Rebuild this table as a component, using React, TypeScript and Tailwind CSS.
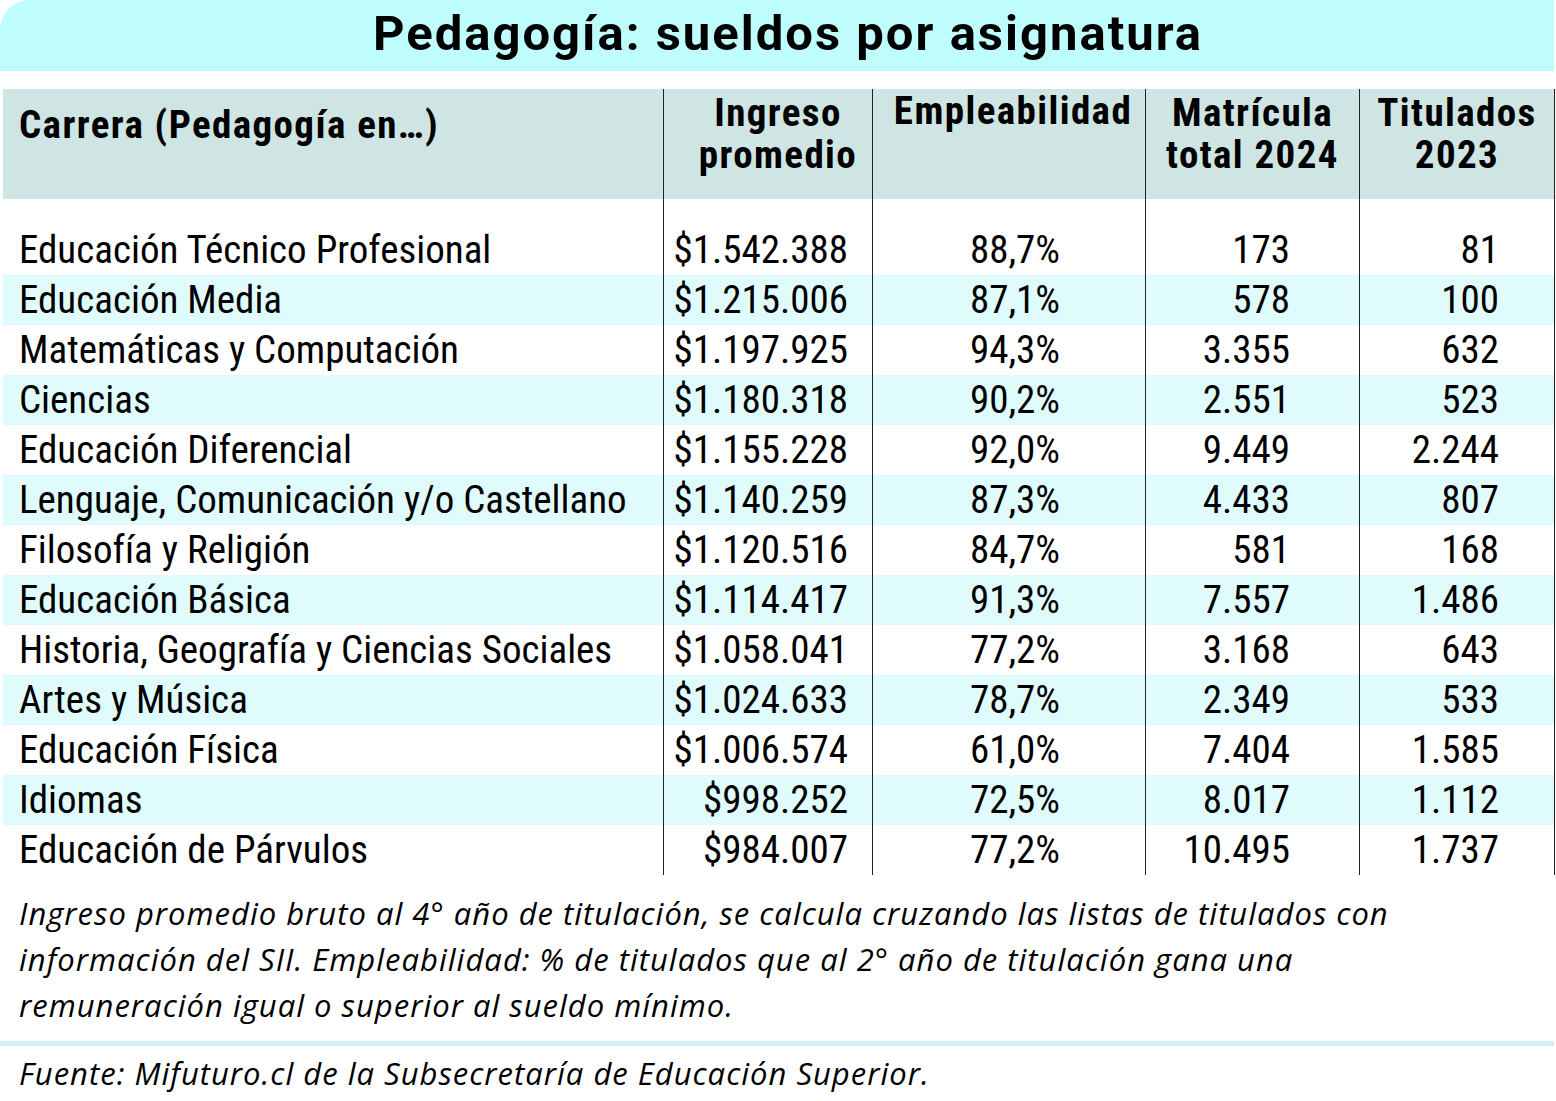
import React from "react";

type Row = [string, string, string, string, string];

const rows: Row[] = [
  ["Educación Técnico Profesional", "$1.542.388", "88,7%", "173", "81"],
  ["Educación Media", "$1.215.006", "87,1%", "578", "100"],
  ["Matemáticas y Computación", "$1.197.925", "94,3%", "3.355", "632"],
  ["Ciencias", "$1.180.318", "90,2%", "2.551", "523"],
  ["Educación Diferencial", "$1.155.228", "92,0%", "9.449", "2.244"],
  ["Lenguaje, Comunicación y/o Castellano", "$1.140.259", "87,3%", "4.433", "807"],
  ["Filosofía y Religión", "$1.120.516", "84,7%", "581", "168"],
  ["Educación Básica", "$1.114.417", "91,3%", "7.557", "1.486"],
  ["Historia, Geografía y Ciencias Sociales", "$1.058.041", "77,2%", "3.168", "643"],
  ["Artes y Música", "$1.024.633", "78,7%", "2.349", "533"],
  ["Educación Física", "$1.006.574", "61,0%", "7.404", "1.585"],
  ["Idiomas", "$998.252", "72,5%", "8.017", "1.112"],
  ["Educación de Párvulos", "$984.007", "77,2%", "10.495", "1.737"],
];

const grid = "grid grid-cols-[660px_209px_273px_214px_196px]";
const line = "border-l border-[#222]";

export default function App() {
  return (
    <div className="w-[1556px] h-[1101px] bg-white text-black font-['Roboto',sans-serif] overflow-hidden">
      {/* Title */}
      <div className="w-[1554px] h-[71px] bg-[#bffcfc] rounded-tl-[30px] flex justify-center pl-[22px]">
        <h1 className="text-[49px] leading-[67px] font-bold tracking-[2px] whitespace-nowrap">
          Pedagogía: sueldos por asignatura
        </h1>
      </div>

      {/* Table */}
      <div className="mt-[18px] ml-[3px] w-[1552px] font-stretch-condensed">
        <div className={`${grid} h-[110px] bg-[#cfe5e4] font-bold text-[39px] leading-[42px] tracking-[1.4px]`}>
          <div className="pl-4 pt-[15px] whitespace-nowrap">Carrera (Pedagogía en…)</div>
          <div className={`${line} text-center pl-[20px] pt-[3px]`}>
            Ingreso
            <br />
            promedio
          </div>
          <div className={`${line} text-center pl-[8px] pt-[1px] whitespace-nowrap`}>Empleabilidad</div>
          <div className={`${line} text-center pt-[3px] whitespace-nowrap`}>
            Matrícula
            <br />
            total 2024
          </div>
          <div className={`${line} border-r text-center pt-[3px]`}>
            Titulados
            <br />
            2023
          </div>
        </div>

        <div className={`${grid} h-[26px]`}>
          <div />
          <div className={line} />
          <div className={line} />
          <div className={line} />
          <div className={`${line} border-r`} />
        </div>

        {rows.map((r, i) => (
          <div
            key={r[0]}
            className={`${grid} h-[50px] text-[39px] leading-[50px] ${
              i % 2 === 1 ? "bg-[#e0fbfb]" : "bg-white"
            }`}
          >
            <div className="pl-4 whitespace-nowrap">{r[0]}</div>
            <div className={`${line} text-right pr-[24px]`}>{r[1]}</div>
            <div className={`${line} text-right pr-[85px]`}>{r[2]}</div>
            <div className={`${line} text-right pr-[69px]`}>{r[3]}</div>
            <div className={`${line} border-r text-right pr-[55px]`}>{r[4]}</div>
          </div>
        ))}
      </div>

      {/* Notes */}
      <div className="mt-[15px] pl-[19px] italic text-[31px] leading-[46px] tracking-[1px] font-['Open_Sans',sans-serif]">
        <p className="whitespace-nowrap">
          Ingreso promedio bruto al 4° año de titulación, se calcula cruzando las listas de titulados con
        </p>
        <p className="whitespace-nowrap">
          información del SII. Empleabilidad: % de titulados que al 2° año de titulación gana una
        </p>
        <p className="whitespace-nowrap">remuneración igual o superior al sueldo mínimo.</p>
      </div>

      <div className="mt-[13px] w-[1554px] h-[5px] bg-[#d5eeee]" />

      <p className="mt-[4px] pl-[19px] italic text-[31px] leading-[46px] tracking-[1px] whitespace-nowrap font-['Open_Sans',sans-serif]">
        Fuente: Mifuturo.cl de la Subsecretaría de Educación Superior.
      </p>
    </div>
  );
}
